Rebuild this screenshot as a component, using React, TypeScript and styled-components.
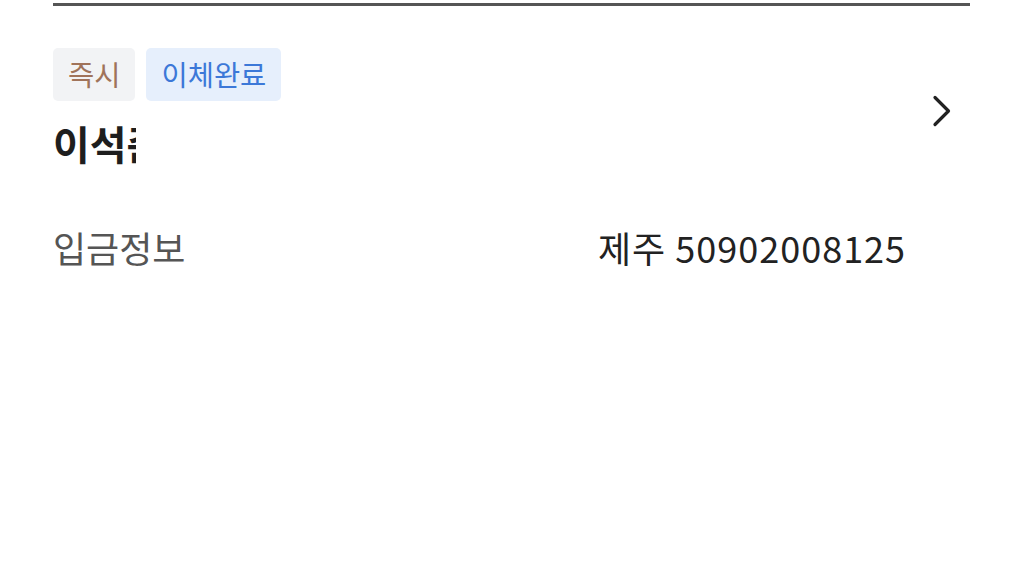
import React from 'react';
import styled, { createGlobalStyle } from 'styled-components';

const GlobalStyle = createGlobalStyle`
  html, body {
    margin: 0;
    padding: 0;
    background: #ffffff;
  }
  body {
    font-family: 'Noto Sans CJK KR', 'Noto Sans', sans-serif;
    color: #222222;
  }
`;

interface Tag {
  label: string;
  tone: 'gray' | 'blue';
}

const tags: Tag[] = [
  { label: '즉시', tone: 'gray' },
  { label: '이체완료', tone: 'blue' },
];

const App: React.FC = () => {
  return (
    <>
      <GlobalStyle />
      <Container>
        <Divider />
        <Summary>
          <SummaryInfo>
            <TagRow>
              {tags.map((tag) => (
                <Badge key={tag.label} tone={tag.tone}>
                  {tag.label}
                </Badge>
              ))}
            </TagRow>
            <Name>이석준</Name>
          </SummaryInfo>
          <Chevron aria-hidden>
            <svg width="20" height="32" viewBox="0 0 20 32" fill="none">
              <path
                d="M3 2.5L16.5 16L3 29.5"
                stroke="#222222"
                strokeWidth="3.2"
                strokeLinecap="round"
                strokeLinejoin="round"
              />
            </svg>
          </Chevron>
        </Summary>
        <InfoRow>
          <InfoLabel>입금정보</InfoLabel>
          <InfoValue>제주 50902008125</InfoValue>
        </InfoRow>
      </Container>
    </>
  );
};

export default App;

const Container = styled.div`
  width: 917px;
  margin-left: 53px;
  padding-top: 3px;
  display: flex;
  flex-direction: column;
`;

const Divider = styled.div`
  height: 3px;
  background-color: #555555;
`;

const Summary = styled.div`
  margin-top: 42px;
  display: flex;
  flex-direction: row;
  align-items: center;
  justify-content: space-between;
`;

const SummaryInfo = styled.div`
  display: flex;
  flex-direction: column;
`;

const TagRow = styled.div`
  display: flex;
  flex-direction: row;
  gap: 11px;
`;

const Badge = styled.span<{ tone: 'gray' | 'blue' }>`
  height: 53px;
  padding: 0 15px;
  display: flex;
  align-items: center;
  border-radius: 5px;
  font-size: 28.5px;
  line-height: 1;
  background-color: ${(p) => (p.tone === 'blue' ? '#e6effc' : '#f2f3f5')};
  color: ${(p) => (p.tone === 'blue' ? '#3c78d8' : '#a0735a')};
`;

const Name = styled.div`
  margin-top: 16px;
  width: 83px;
  overflow: hidden;
  white-space: nowrap;
  font-size: 40px;
  line-height: 52px;
  font-weight: 700;
  color: #1e1e1e;
`;

const Chevron = styled.div`
  margin-right: 18px;
  margin-top: 4px;
  display: flex;
`;

const InfoRow = styled.div`
  margin-top: 52px;
  display: grid;
  grid-template-columns: 545px 1fr;
  align-items: center;
`;

const InfoLabel = styled.div`
  font-size: 36px;
  line-height: 52px;
  color: #555555;
`;

const InfoValue = styled.div`
  font-size: 36px;
  line-height: 52px;
  letter-spacing: 1px;
  color: #222222;
`;
